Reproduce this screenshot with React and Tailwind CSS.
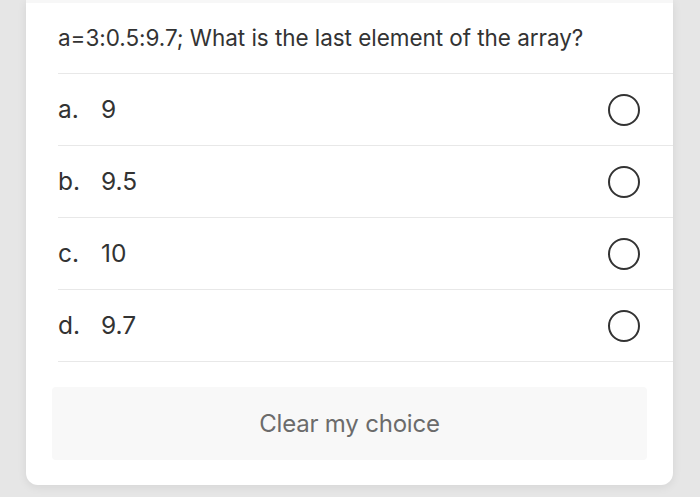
const options = [
  { letter: "a.", value: "9" },
  { letter: "b.", value: "9.5" },
  { letter: "c.", value: "10" },
  { letter: "d.", value: "9.7" },
];

export default function App() {
  return (
    <div
      className="h-[497px] w-[700px] overflow-hidden bg-[#e6e6e6] pl-[26px]"
      style={{ fontFamily: "Inter, 'Noto Sans', sans-serif" }}
    >
      <div className="w-[647px] overflow-hidden rounded-b-[12px] bg-white pb-[25px] shadow-[0_2px_10px_rgba(0,0,0,0.08)]">
        <div className="h-[3px] bg-[#f7f7f7]" />
        <div className="ml-[32px] flex h-[71px] items-center border-b border-[#e8e8e8] text-[22.5px] tracking-[-0.05px] text-[#333]">
          a=3:0.5:9.7; What is the last element of the array?
        </div>
        {options.map((o) => (
          <div
            key={o.letter}
            className="ml-[32px] flex h-[72px] items-center justify-between border-b border-[#e8e8e8] pr-[33px] text-[24.5px] text-[#333]"
          >
            <div className="flex items-center">
              <span className="w-[43px]">{o.letter}</span>
              <span>{o.value}</span>
            </div>
            <span className="h-[32px] w-[32px] rounded-full border-2 border-[#333]" />
          </div>
        ))}
        <button
          type="button"
          className="mx-[26px] mt-[25px] flex h-[73px] w-[595px] items-center justify-center rounded-[4px] bg-[#f8f8f8] text-[24px] tracking-[-0.2px] text-[#6b6b6b]"
        >
          Clear my choice
        </button>
      </div>
    </div>
  );
}
